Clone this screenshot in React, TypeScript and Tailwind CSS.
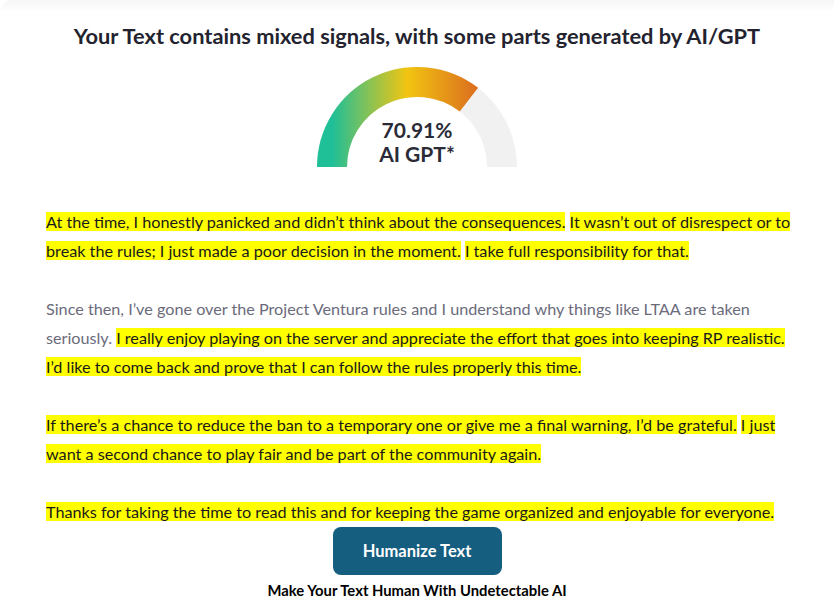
import React from 'react';

type Piece = { text: string; ai: boolean };

// each paragraph is a list of sentences, highlighted when flagged as AI
const paragraphs: Piece[][] = [
  [
    { text: 'At the time, I honestly panicked and didn’t think about the consequences.', ai: true },
    { text: 'It wasn’t out of disrespect or to break the rules; I just made a poor decision in the moment.', ai: true },
    { text: 'I take full responsibility for that.', ai: true },
  ],
  [
    { text: 'Since then, I’ve gone over the Project Ventura rules and I understand why things like LTAA are taken seriously.', ai: false },
    { text: 'I really enjoy playing on the server and appreciate the effort that goes into keeping RP realistic.', ai: true },
    { text: 'I’d like to come back and prove that I can follow the rules properly this time.', ai: true },
  ],
  [
    { text: 'If there’s a chance to reduce the ban to a temporary one or give me a final warning, I’d be grateful.', ai: true },
    { text: 'I just want a second chance to play fair and be part of the community again.', ai: true },
  ],
  [
    { text: 'Thanks for taking the time to read this and for keeping the game organized and enjoyable for everyone.', ai: true },
  ],
];

const Gauge = ({ value }: { value: number }) => {
  const cx = 100;
  const cy = 100;
  const r = 85;
  const angle = Math.PI - (value / 100) * Math.PI;
  const ex = cx + r * Math.cos(angle);
  const ey = cy - r * Math.sin(angle);
  return (
    <div className="relative w-[200px] h-[100px]">
      <svg width="200" height="100" viewBox="0 0 200 100">
        <defs>
          <linearGradient id="gauge" x1="15" y1="0" x2="165" y2="0" gradientUnits="userSpaceOnUse">
            <stop offset="0" stopColor="#1fbf98" />
            <stop offset="0.5" stopColor="#f2c511" />
            <stop offset="1" stopColor="#d9681f" />
          </linearGradient>
        </defs>
        <path d="M 15 100 A 85 85 0 0 1 185 100" fill="none" stroke="#f1f1f1" strokeWidth="30" />
        <path d={`M 15 100 A 85 85 0 0 1 ${ex} ${ey}`} fill="none" stroke="url(#gauge)" strokeWidth="30" />
      </svg>
      <div className="absolute inset-x-0 bottom-[1px] flex flex-col items-center text-[21px] leading-[24px] font-bold text-[#2b2b38]">
        <span>{value}%</span>
        <span>AI GPT*</span>
      </div>
    </div>
  );
};

export default function App() {
  return (
    <div className="min-h-screen bg-white font-['Lato','Liberation_Sans',sans-serif]">
      <div className="h-3 bg-gradient-to-b from-[#f6f6f6] to-white rounded-tl-[40px]" />
      <h1 className="text-center text-[21.8px] leading-[24px] font-bold text-[#23232f] mt-[12px]">
        Your Text contains mixed signals, with some parts generated by AI/GPT
      </h1>
      <div className="flex justify-center mt-[19px]">
        <Gauge value={70.91} />
      </div>

      <div className="ml-[46px] mr-[36px] mt-[40px] text-[16.2px] leading-[29px]">
        {paragraphs.map((para, i) => (
          <p key={i} className={i > 0 ? 'mt-[29px]' : ''}>
            {para.map((s, j) => (
              <React.Fragment key={j}>
                {j > 0 && ' '}
                {s.ai ? (
                  <span className="bg-[#ffff00] text-[#1a1a1a]">{s.text}</span>
                ) : (
                  <span className="text-[#6b6b7b]">{s.text}</span>
                )}
              </React.Fragment>
            ))}
          </p>
        ))}
      </div>

      <div className="flex flex-col items-center">
        <button className="mt-[1px] w-[169px] h-[48px] rounded-[8px] bg-[#155e80] text-white text-[16.5px] font-bold">
          Humanize Text
        </button>
        <p className="mt-[5px] text-[14.8px] leading-[20px] font-bold text-black">Make Your Text Human With Undetectable AI</p>
      </div>
    </div>
  );
}
